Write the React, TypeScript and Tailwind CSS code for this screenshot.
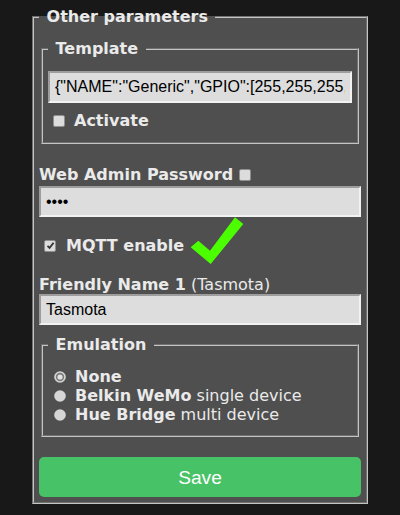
import React from 'react'

const inputCls =
    "block w-full bg-[#dddddd] text-black px-[5px] border-2 border-t-[#9d9d9d] border-l-[#9d9d9d] border-b-[#f2f2f2] border-r-[#f2f2f2] font-['Liberation_Sans',Arial,sans-serif] text-base outline-none"

function Box({ checked = false }: { checked?: boolean }) {
    return (
        <span className="inline-flex w-[12px] h-[12px] shrink-0 items-center justify-center rounded-[2px] border border-[#8f8f8f] bg-[#dcdcdc]">
            {checked && (
                <svg width="9" height="9" viewBox="0 0 9 9">
                    <path d="M1.5 4.8 L3.6 6.8 L7.6 1.8" fill="none" stroke="#333" strokeWidth="1.8" />
                </svg>
            )}
        </span>
    )
}

function Radio({ checked = false }: { checked?: boolean }) {
    return (
        <svg width="12" height="12" viewBox="0 0 12 12" className="shrink-0">
            <circle cx="6" cy="6" r="5.8" fill="#d6d6d6" />
            {checked && <circle cx="6" cy="6" r="3.4" fill="#e2e2e2" stroke="#7a7a7a" strokeWidth="1.6" />}
        </svg>
    )
}

export default function App() {
    return (
        <div className="min-h-screen bg-[#181818] flex justify-center pt-[7px] font-['DejaVu_Sans',Verdana,sans-serif] leading-[19px] text-base text-[#eaeaea]">
            <fieldset className="w-[336px] self-start bg-[#4f4f4f] border-2 [border-style:groove] border-[#c4c4c4] p-[5px]">
                <legend className="px-[2px] font-bold">&nbsp;Other parameters&nbsp;</legend>

                <fieldset className="mt-[8px] mx-[2px] border-2 [border-style:groove] border-[#c4c4c4] p-[5px]">
                    <legend className="px-[2px] font-bold">&nbsp;Template&nbsp;</legend>
                    <input
                        readOnly
                        className={inputCls + ' mt-[8px] h-[32px]'}
                        value='{"NAME":"Generic","GPIO":[255,255,255,255,255,255,255,255,255,255,255,255,255],"FLAG":15,"BASE":18}'
                    />
                    <div className="mt-[8px] mb-[7px] flex items-center">
                        <span className="ml-[5px] mr-[9px] flex"><Box /></span>
                        <b>Activate</b>
                    </div>
                </fieldset>

                <div className="mt-[21px] flex items-center">
                    <b>Web Admin Password</b>
                    <span className="ml-[6px] flex"><Box /></span>
                </div>
                <input readOnly type="password" value="****" className={inputCls + ' mt-[2px] h-[31px]'} />

                <div className="relative mt-[19px] flex items-center">
                    <span className="ml-[5px] mr-[10px] flex"><Box checked /></span>
                    <b>MQTT enable</b>
                    <svg className="absolute left-[151px] top-[-20px]" width="56" height="50" viewBox="190 217 56 50">
                        <polygon points="190.7,248.3 198.3,241.7 210,251.7 235,218.3 243.3,225 210.7,265" fill="#4cff00" />
                    </svg>
                </div>

                <div className="mt-[20px]">
                    <b>Friendly Name 1</b> (Tasmota)
                </div>
                <input readOnly value="Tasmota" className={inputCls + ' h-[31px]'} />

                <fieldset className="mt-[10px] mx-[2px] border-2 [border-style:groove] border-[#c4c4c4] p-[5px]">
                    <legend className="px-[2px] font-bold">&nbsp;Emulation&nbsp;</legend>
                    <div className="mt-[8px] mb-[6px]">
                        <div className="flex items-center">
                            <span className="ml-[6px] mr-[9px] flex"><Radio checked /></span>
                            <b>None</b>
                        </div>
                        <div className="flex items-center">
                            <span className="ml-[6px] mr-[9px] flex"><Radio /></span>
                            <span><b>Belkin WeMo</b> single device</span>
                        </div>
                        <div className="flex items-center">
                            <span className="ml-[6px] mr-[9px] flex"><Radio /></span>
                            <span><b>Hue Bridge</b> multi device</span>
                        </div>
                    </div>
                </fieldset>

                <button className="mt-[20px] block w-full h-[40px] rounded-[5px] bg-[#47c266] text-white font-['Liberation_Sans',Arial,sans-serif] text-[19.2px]">
                    Save
                </button>
            </fieldset>
        </div>
    )
}
